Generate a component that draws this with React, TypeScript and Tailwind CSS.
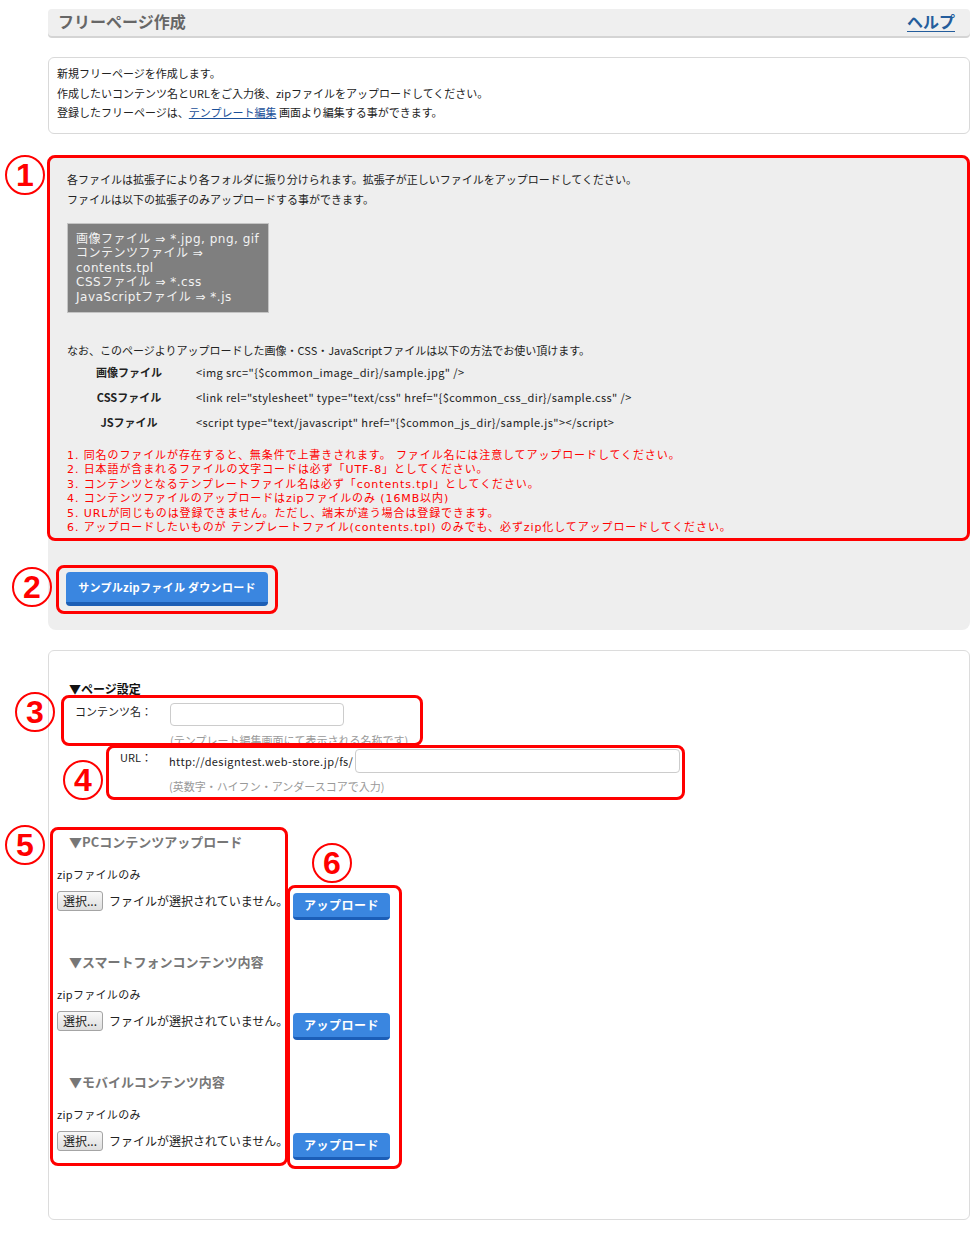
import React from "react";

const Circle = ({ n, x, y }: { n: string; x: number; y: number }) => (
  <div
    className="absolute w-[40px] h-[40px] rounded-full border-[2.5px] border-[#ff0000] flex items-center justify-center text-[#ff0000] text-[32px] font-bold leading-none font-['Liberation_Sans',sans-serif]"
    style={{ left: x, top: y }}
  >
    <span className="-mt-[1px]">{n}</span>
  </div>
);

const RedBox = ({ x, y, w, h }: { x: number; y: number; w: number; h: number }) => (
  <div
    className="absolute border-[3px] border-[#ff0000] rounded-[8px]"
    style={{ left: x, top: y, width: w, height: h }}
  />
);

const UploadSection = ({ title, first }: { title: string; first?: boolean }) => (
  <div className={first ? "mt-[40px]" : "mt-[34px]"}>
    <div className="pl-[20px] text-[13px] leading-[16px] font-bold text-[#777]">{title}</div>
    <div className="pl-[8px] mt-[16px] text-[11px] leading-[16px] text-[#222] tracking-[0.3px]">zipファイルのみ</div>
    <div className="pl-[8px] mt-[9px] flex items-start">
      <div className="w-[236px] flex items-center h-[20px]">
        <div className="h-[20px] w-[46px] border border-[#a4a4a4] rounded-[3px] bg-[linear-gradient(#f8f8f8,#dedede)] text-[12px] leading-[18px] text-[#222] text-center">
          選択...
        </div>
        <span className="ml-[6px] text-[12px] text-[#222] whitespace-nowrap">ファイルが選択されていません。</span>
      </div>
      <div className="mt-[2px] w-[97px] h-[27px] bg-[#3a86e0] border-b-[3px] border-[#1b5eb8] rounded-[4px] text-white text-[12px] font-bold flex items-center justify-center tracking-[0.5px]">
        アップロード
      </div>
    </div>
  </div>
);

export default function App() {
  return (
    <div className="relative w-[980px] min-h-[1240px] bg-white font-['Noto_Sans_CJK_JP',sans-serif] text-[#222]">
      <div className="ml-[48px] w-[922px] pt-[9px] pb-[20px]">
        {/* header */}
        <div className="h-[27px] bg-[#efefef] rounded-[4px] shadow-[0_2px_0_#d4d4d4] flex items-center justify-between pl-[10px] pr-[15px] pb-[3px]">
          <span className="text-[16px] font-bold text-[#666] leading-none">フリーページ作成</span>
          <span className="text-[16px] font-bold text-[#245d9c] leading-none underline underline-offset-[3px]">ヘルプ</span>
        </div>

        {/* info */}
        <div className="mt-[21px] h-[77px] border border-[#d9d9d9] rounded-[6px] px-[8px] pt-[6px] text-[11px] leading-[19.5px]">
          <p>新規フリーページを作成します。</p>
          <p>作成したいコンテンツ名とURLをご入力後、zipファイルをアップロードしてください。</p>
          <p>
            登録したフリーページは、<span className="text-[#1a4f99] underline">テンプレート編集</span> 画面より編集する事ができます。
          </p>
        </div>

        {/* gray panel */}
        <div className="mt-[21px] bg-[#eeeeee] rounded-[8px]">
          <div className="h-[386px] pl-[19px] pt-[14px]">
            <p className="text-[11px] leading-[20px]">各ファイルは拡張子により各フォルダに振り分けられます。拡張子が正しいファイルをアップロードしてください。</p>
            <p className="text-[11px] leading-[20px]">ファイルは以下の拡張子のみアップロードする事ができます。</p>
            <div className="mt-[14px] w-[202px] h-[90px] bg-[#7f7f7f] border border-[#c4c4c4] pl-[8px] pt-[8px] text-[12px] leading-[14.4px] tracking-[0.5px] text-[#f2f2f2] font-['DejaVu_Sans','Noto_Sans_CJK_JP',sans-serif]">
              <div>画像ファイル ⇒ *.jpg, png, gif</div>
              <div>コンテンツファイル ⇒</div>
              <div>contents.tpl</div>
              <div>CSSファイル ⇒ *.css</div>
              <div>JavaScriptファイル ⇒ *.js</div>
            </div>
            <p className="mt-[27px] text-[11px] leading-[20px]">なお、このページよりアップロードした画像・CSS・JavaScriptファイルは以下の方法でお使い頂けます。</p>
            <div className="ml-[29px] grid grid-cols-[66px_1fr] gap-x-[34px] text-[11px] leading-[25px]">
              <div className="font-bold text-center">画像ファイル</div>
              <div className="tracking-[0.4px]">&lt;img src="{"{$common_image_dir}"}/sample.jpg" /&gt;</div>
              <div className="font-bold text-center">CSSファイル</div>
              <div className="tracking-[0.4px]">&lt;link rel="stylesheet" type="text/css" href="{"{$common_css_dir}"}/sample.css" /&gt;</div>
              <div className="font-bold text-center">JSファイル</div>
              <div className="tracking-[0.4px]">&lt;script type="text/javascript" href="{"{$common_js_dir}"}/sample.js"&gt;&lt;/script&gt;</div>
            </div>
            <div className="mt-[14px] text-[11px] tracking-[0.9px] leading-[14.4px] text-[#ff0000] font-['DejaVu_Sans','Noto_Sans_CJK_JP',sans-serif]">
              <div>1. 同名のファイルが存在すると、無条件で上書きされます。 ファイル名には注意してアップロードしてください。</div>
              <div>2. 日本語が含まれるファイルの文字コードは必ず「UTF-8」としてください。</div>
              <div>3. コンテンツとなるテンプレートファイル名は必ず「contents.tpl」としてください。</div>
              <div>4. コンテンツファイルのアップロードはzipファイルのみ (16MB以内)</div>
              <div>5. URLが同じものは登録できません。ただし、端末が違う場合は登録できます。</div>
              <div>6. アップロードしたいものが テンプレートファイル(contents.tpl) のみでも、必ずzip化してアップロードしてください。</div>
            </div>
          </div>
          <div className="pl-[18px] pt-[31px] pb-[24px]">
            <div className="w-[202px] h-[34px] bg-[#3a86e0] border-b-[4px] border-[#1d5fb5] rounded-[4px] text-white text-[11px] font-bold flex items-center justify-center tracking-[0.3px]">
              サンプルzipファイル ダウンロード
            </div>
          </div>
        </div>

        {/* form */}
        <div className="mt-[20px] h-[570px] border border-[#dcdcdc] rounded-[6px] pt-[30px]">
          <div className="pl-[20px] text-[12px] leading-[16px] font-bold text-[#111]">▼ページ設定</div>
          <div className="mt-[6px] flex items-start">
            <div className="w-[103px] text-right text-[11px] leading-[16px]">コンテンツ名：</div>
            <div className="ml-[18px]">
              <div className="w-[174px] h-[23px] border border-[#cccccc] rounded-[4px] bg-white" />
              <div className="mt-[6px] text-[11px] leading-[16px] text-[#999]">(テンプレート編集画面にて表示される名称です)</div>
            </div>
          </div>
          <div className="mt-[1px] flex items-start">
            <div className="w-[103px] text-right text-[11px] leading-[16px]">URL：</div>
            <div className="ml-[17px]">
              <div className="flex items-center">
                <span className="text-[11px] leading-[16px] tracking-[0.4px] whitespace-nowrap">http://designtest.web-store.jp/fs/</span>
                <div className="ml-[2px] w-[325px] h-[24px] border border-[#cccccc] rounded-[4px] bg-white" />
              </div>
              <div className="mt-[5px] text-[11px] leading-[16px] text-[#999]">(英数字・ハイフン・アンダースコアで入力)</div>
            </div>
          </div>

          <UploadSection title="▼PCコンテンツアップロード" first />
          <UploadSection title="▼スマートフォンコンテンツ内容" />
          <UploadSection title="▼モバイルコンテンツ内容" />
        </div>
      </div>

      {/* annotations */}
      <RedBox x={47} y={155} w={923} h={386} />
      <RedBox x={56} y={565} w={222} h={49} />
      <RedBox x={61} y={695} w={362} h={51} />
      <RedBox x={106} y={745} w={579} h={55} />
      <RedBox x={50} y={827} w={238} h={339} />
      <RedBox x={287} y={885} w={115} h={284} />
      <Circle n="1" x={5} y={155} />
      <Circle n="2" x={12} y={567} />
      <Circle n="3" x={15} y={692} />
      <Circle n="4" x={63} y={760} />
      <Circle n="5" x={5} y={825} />
      <Circle n="6" x={312} y={843} />
    </div>
  );
}
